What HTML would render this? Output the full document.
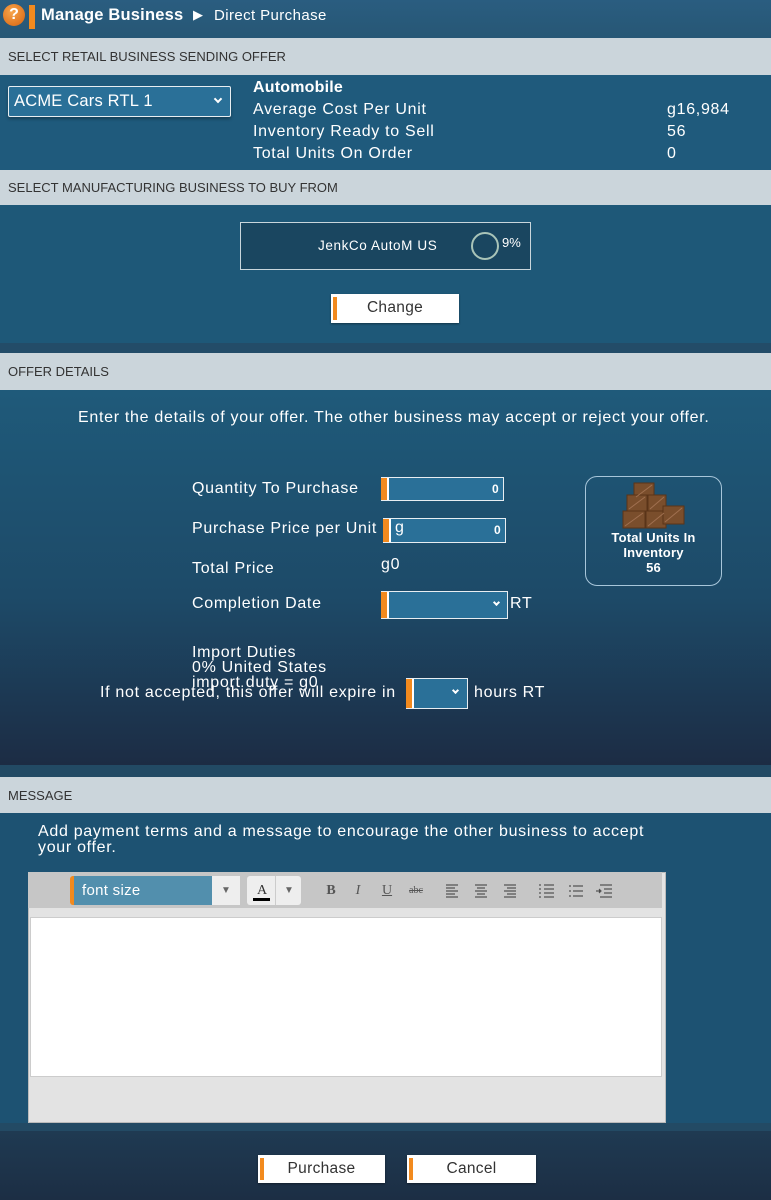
<!DOCTYPE html>
<html><head><meta charset="utf-8"><style>
*{box-sizing:border-box;margin:0;padding:0}
body{width:771px;height:1200px;overflow:hidden;font-family:"Liberation Sans","DejaVu Sans",sans-serif;color:#fff;background:#1e5474;position:relative}
.abs{position:absolute}
.bar{position:absolute;left:0;width:771px;background:#cbd5db;color:#333;font-size:13px;padding-left:8px;display:flex;align-items:center}
.lbl{position:absolute;font-size:16px;color:#fff;letter-spacing:.7px;white-space:nowrap}
.inp{position:absolute;background:#2a7098;border:1px solid #e8eef2;border-left:none;}
.inp:before{content:"";position:absolute;left:0;top:0;bottom:0;width:6px;background:#f28a1e;border-right:2px solid #fff}
.btn{position:absolute;background:#fff;color:#333;font-size:15.5px;text-align:center;box-shadow:0 1px 2px rgba(0,0,0,.4);letter-spacing:.3px}
.btn:before{content:"";position:absolute;left:2px;top:3px;bottom:3px;width:4px;background:#f28a1e}
.chev{position:absolute;width:7px;height:7px;border-right:2px solid #fff;border-bottom:2px solid #fff;transform:rotate(45deg)}
.tb{position:absolute;top:876px;height:29px;color:#555;font-family:"Liberation Serif",serif;font-size:14px;text-align:center;line-height:29px}
</style></head><body>
<div class="abs" style="left:0;top:0;width:771px;height:38px;background:linear-gradient(#2a5d80,#275775)"></div>
<div class="abs" style="left:3px;top:4px;width:22px;height:22px;border-radius:50%;background:radial-gradient(circle at 40% 35%,#f7a54c,#d8620e);color:#fff;font-weight:bold;font-size:16px;text-align:center;line-height:22px">?</div>
<div class="abs" style="left:29px;top:5px;width:6px;height:24px;background:#f28a1e"></div>
<div class="lbl" style="left:41px;top:6px;font-size:16.5px;font-weight:bold;letter-spacing:.2px">Manage Business</div>
<div class="lbl" style="left:193px;top:7px;font-size:13px">▶</div>
<div class="lbl" style="left:214px;top:7px;font-size:15px;letter-spacing:.4px">Direct Purchase</div>

<div class="bar" style="top:38px;height:37px">SELECT RETAIL BUSINESS SENDING OFFER</div>
<div class="abs" style="left:0;top:75px;width:771px;height:95px;background:#1f5a7c"></div>
<div class="abs" style="left:8px;top:86px;width:223px;height:31px;background:#2a7098;border:1px solid #e8eef2;border-radius:2px;box-shadow:0 2px 3px rgba(0,0,0,.3)"></div>
<div class="lbl" style="left:14px;top:92px;font-size:16.5px;letter-spacing:.2px">ACME Cars RTL 1</div>
<div class="chev" style="left:215px;top:96px;width:6px;height:6px"></div>
<div class="lbl" style="left:253px;top:79px;font-weight:bold;font-size:16px;letter-spacing:.2px">Automobile</div>
<div class="lbl" style="left:253px;top:101px">Average Cost Per Unit</div>
<div class="lbl" style="left:253px;top:123px">Inventory Ready to Sell</div>
<div class="lbl" style="left:253px;top:145px">Total Units On Order</div>
<div class="lbl" style="left:667px;top:101px">g16,984</div>
<div class="lbl" style="left:667px;top:123px">56</div>
<div class="lbl" style="left:667px;top:145px">0</div>

<div class="bar" style="top:170px;height:35px">SELECT MANUFACTURING BUSINESS TO BUY FROM</div>
<div class="abs" style="left:0;top:205px;width:771px;height:138px;background:#1e5878"></div>
<div class="abs" style="left:240px;top:222px;width:291px;height:48px;background:#1a4660;border:1px solid #c9d6dc"></div>
<div class="lbl" style="left:318px;top:238px;font-size:13.5px;letter-spacing:.6px">JenkCo AutoM US</div>
<div class="abs" style="left:471px;top:232px;width:28px;height:28px;border-radius:50%;border:2px solid #a9c4b8"></div>
<div class="lbl" style="left:502px;top:235px;font-size:13px;letter-spacing:0">9%</div>
<div class="btn" style="left:331px;top:294px;width:128px;height:29px;line-height:27px">Change</div>
<div class="abs" style="left:0;top:343px;width:771px;height:10px;background:#234c68"></div>

<div class="bar" style="top:353px;height:37px">OFFER DETAILS</div>
<div class="abs" style="left:0;top:390px;width:771px;height:375px;background:linear-gradient(#1f5a7a,#1d4a68 55%,#1c2c44)"></div>
<div class="lbl" style="left:78px;top:409px">Enter the details of your offer. The other business may accept or reject your offer.</div>
<div class="lbl" style="left:192px;top:480px">Quantity To Purchase</div>
<div class="inp" style="left:381px;top:477px;width:123px;height:24px"></div>
<div class="lbl" style="left:492px;top:482px;font-size:12px;font-weight:bold">0</div>
<div class="lbl" style="left:192px;top:520px">Purchase Price per Unit</div>
<div class="inp" style="left:383px;top:518px;width:123px;height:25px"></div>
<div class="lbl" style="left:395px;top:519px;font-size:16px">g</div>
<div class="lbl" style="left:494px;top:523px;font-size:12px;font-weight:bold">0</div>
<div class="lbl" style="left:192px;top:560px">Total Price</div>
<div class="lbl" style="left:381px;top:556px">g0</div>
<div class="lbl" style="left:192px;top:595px">Completion Date</div>
<div class="inp" style="left:381px;top:591px;width:127px;height:28px"></div>
<div class="chev" style="left:494px;top:600px;width:5px;height:5px"></div>
<div class="lbl" style="left:510px;top:595px">RT</div>
<div class="abs" style="left:585px;top:476px;width:137px;height:110px;border:1px solid #a8c6da;border-radius:12px"></div>
<svg class="abs" style="left:622px;top:481px" width="64" height="48" viewBox="0 0 64 48">
<g fill="#7a4e2c" stroke="#5a3418" stroke-width="1">
<rect x="12" y="2" width="20" height="16"/><rect x="5" y="14" width="20" height="16"/><rect x="26" y="14" width="18" height="16"/>
<rect x="1" y="30" width="22" height="17"/><rect x="24" y="30" width="20" height="17"/><rect x="41" y="25" width="21" height="18"/></g>
<g stroke="#a07050" stroke-width="1"><path d="M14 16L30 4M7 28L23 16M28 28L42 16M3 45L21 32M26 45L42 32M43 41L60 27"/></g></svg>
<div class="lbl" style="left:585px;top:530px;width:137px;text-align:center;font-size:13px;line-height:15px;font-weight:bold;letter-spacing:.2px">Total Units In<br>Inventory<br>56</div>
<div class="lbl" style="left:192px;top:645px;line-height:15px">Import Duties<br>0% United States<br>import duty = g0</div>
<div class="lbl" style="left:100px;top:684px">If not accepted, this offer will expire in</div>
<div class="inp" style="left:406px;top:678px;width:62px;height:31px"></div>
<div class="chev" style="left:453px;top:688px;width:5px;height:5px"></div>
<div class="lbl" style="left:474px;top:684px">hours RT</div>
<div class="abs" style="left:0;top:765px;width:771px;height:12px;background:#224a64"></div>

<div class="bar" style="top:777px;height:36px">MESSAGE</div>
<div class="abs" style="left:0;top:813px;width:771px;height:310px;background:#1d5272"></div>
<div class="lbl" style="left:38px;top:824px;line-height:16px">Add payment terms and a message to encourage the other business to accept<br>your offer.</div>
<div class="abs" style="left:28px;top:872px;width:638px;height:251px;background:#e3e3e3;border:1px solid #bbb"></div>
<div class="abs" style="left:28px;top:872px;width:634px;height:36px;background:#c6c6c6"></div>
<div class="abs" style="left:70px;top:876px;width:142px;height:29px;background:#528fad;border-left:4px solid #f28a1e;border-radius:3px 0 0 3px"></div>
<div class="lbl" style="left:82px;top:882px;font-size:15px;letter-spacing:.3px">font size</div>
<div class="abs" style="left:212px;top:876px;width:28px;height:29px;background:#eee;color:#666;font-size:10px;text-align:center;line-height:29px">▼</div>
<div class="abs" style="left:247px;top:876px;width:54px;height:29px;background:#eee;border-radius:3px"></div>
<div class="tb" style="left:250px;width:24px;color:#333">A</div>
<div class="abs" style="left:253px;top:898px;width:17px;height:3px;background:#000"></div>
<div class="abs" style="left:275px;top:876px;width:1px;height:29px;background:#ccc"></div>
<div class="tb" style="left:278px;width:22px;font-size:10px;font-family:sans-serif;color:#666">▼</div>
<div class="tb" style="left:320px;width:22px;font-weight:bold">B</div>
<div class="tb" style="left:347px;width:22px;font-style:italic">I</div>
<div class="tb" style="left:376px;width:22px;text-decoration:underline">U</div>
<div class="tb" style="left:405px;width:22px;font-size:10px;text-decoration:line-through">abc</div>
<svg class="abs" style="left:444px;top:883px" width="172" height="16" viewBox="0 0 172 16"><g stroke="#555" stroke-width="1.2">
<path d="M2 2h12M2 5h9M2 8h12M2 11h9M2 14h12"/><path d="M31 2h12M33 5h8M31 8h12M33 11h8M31 14h12"/><path d="M60 2h12M63 5h9M60 8h12M63 11h9M60 14h12"/>
<path d="M100 2h10M100 6h10M100 10h10M100 14h10M95 2h2M95 6h2M95 10h2M95 14h2"/><path d="M129 3h10M129 8h10M129 13h10M125 3h2M125 8h2M125 13h2"/>
<path d="M156 2h12M160 6h8M160 10h8M156 14h12M152 8h5M155 6l2 2-2 2"/></g></svg>
<div class="abs" style="left:30px;top:917px;width:632px;height:160px;background:#fff;border:1px solid #ccc"></div>
<div class="abs" style="left:0;top:1123px;width:771px;height:8px;background:#234a64"></div>
<div class="abs" style="left:0;top:1131px;width:771px;height:69px;background:linear-gradient(#1f3a52,#1c2e44)"></div>
<div class="btn" style="left:258px;top:1155px;width:127px;height:28px;line-height:27px">Purchase</div>
<div class="btn" style="left:407px;top:1155px;width:129px;height:28px;line-height:27px">Cancel</div>
</body></html>
